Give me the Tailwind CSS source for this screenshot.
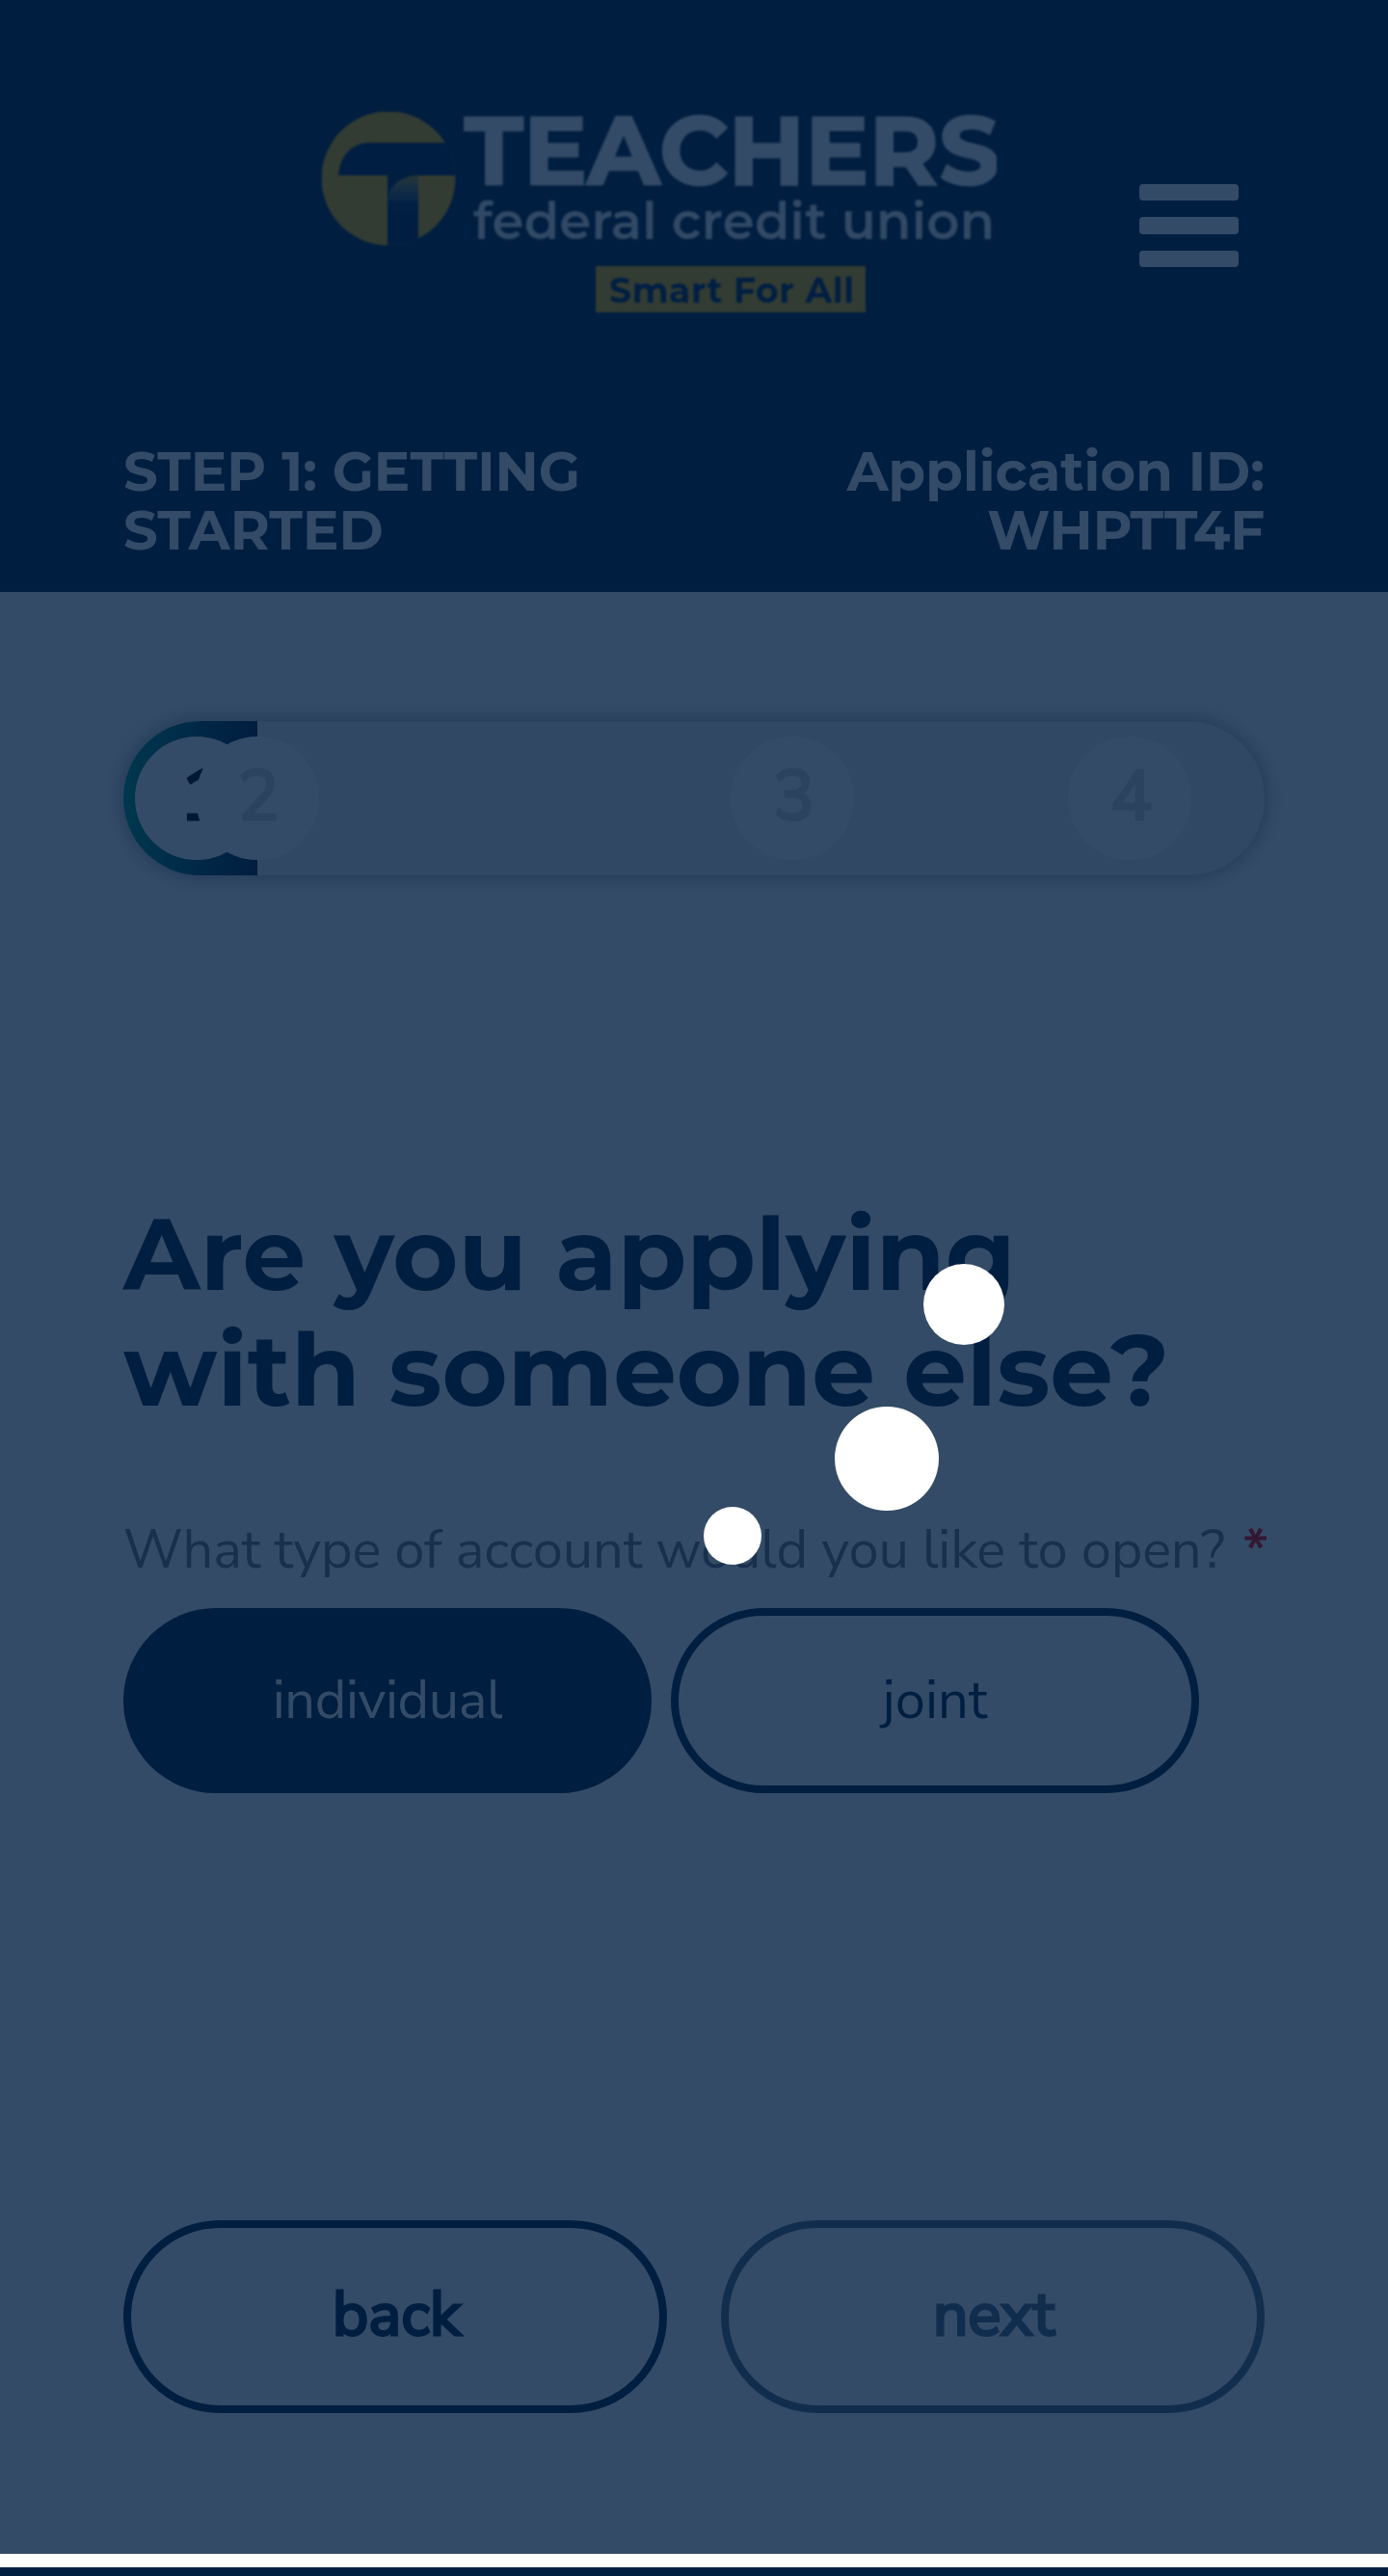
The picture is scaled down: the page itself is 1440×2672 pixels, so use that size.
<!DOCTYPE html>
<html lang="en">
<head>
<meta charset="utf-8">
<title>Teachers Federal Credit Union</title>
<script src="https://cdn.jsdelivr.net/npm/@tailwindcss/browser@4"></script>
</head>
<body class="relative h-[2672px] overflow-hidden bg-white font-['Nunito_Sans','Nunito',sans-serif] text-[56px]">
<header class="flex h-[614px] flex-col justify-between bg-[#001e40] px-32 pt-[116px] pb-[33px] font-['Montserrat',sans-serif] font-bold text-white">
  <div class="flex items-start justify-between pr-[27px] pl-[206px]">
    <svg class="h-[208px] w-[700px] overflow-hidden blur-[1px]" viewBox="0 0 700 208">
      <defs>
        <clipPath id="disc"><circle cx="69" cy="69" r="69.5"/></clipPath>
        <linearGradient id="fold" x1="0" y1="0" x2="0" y2="1"><stop offset="0" stop-color="#ffb400" stop-opacity=".75"/><stop offset=".8" stop-color="#ffffff" stop-opacity="0.02"/></linearGradient>
      </defs>
      <g clip-path="url(#disc)">
        <rect width="140" height="140" fill="#ffb400"/>
        <path d="M17 66C19 45 31 32 50 32H140V66H100V140H68V66Z" fill="#00214a"/>
        <path d="M100 66C84 66 73 74 69 86V104H100Z" fill="url(#fold)"/>
      </g>
      <text x="148" y="74.5" font-size="98" textLength="555" lengthAdjust="spacing" fill="#fff" stroke="#fff" stroke-width="2.5">TEACHERS</text>
      <text x="157" y="132" font-size="53" font-weight="600" textLength="541" lengthAdjust="spacing" fill="#f4f4f4">federal credit union</text>
      <rect x="284" y="160" width="280" height="48" fill="#ffb400"/>
      <text x="298" y="198" font-size="36" textLength="254" lengthAdjust="spacing" fill="#00234d">Smart For All</text>
    </svg>
    <button class="mt-[75px] flex flex-col gap-[17px]" aria-label="Menu">
      <span class="h-[17.3px] w-[103px] rounded bg-white"></span>
      <span class="h-[17.3px] w-[103px] rounded bg-white"></span>
      <span class="h-[17.3px] w-[103px] rounded bg-white"></span>
    </button>
  </div>
  <div class="flex justify-between leading-[61px]">
    <h2>STEP 1: GETTING<br>STARTED</h2>
    <h2 class="text-right">Application ID:<br>WHPTT4F</h2>
  </div>
</header>

<main class="px-32 pt-[134px]">
  <div class="relative h-40 rounded-full bg-[#f0f0f0] text-[72px] text-[#d4d4d4] shadow-[0_0_22px_rgba(0,0,0,0.42)] [-webkit-text-stroke:3px]">
    <div class="h-40 w-[139px] rounded-l-full rounded-r-xs bg-linear-to-r from-[#009b8c] to-[#001e40]"></div>
    <span class="absolute top-4 left-3 flex size-32 items-center justify-center rounded-full bg-white pb-1 pl-2 text-black">1</span>
    <span class="absolute top-4 left-[75px] flex size-32 items-center justify-center rounded-full bg-white pb-1 pl-0.5">2</span>
    <span class="absolute top-4 left-[630px] flex size-32 items-center justify-center rounded-full bg-white pb-1 pl-[3px]">3</span>
    <span class="absolute top-4 left-[980px] flex size-32 items-center justify-center rounded-full bg-white pb-1 pl-[3px]">4</span>
  </div>

  <h1 class="mt-[333px] font-['Montserrat',sans-serif] text-[104px] leading-[119.5px] font-bold text-[#001e40]">Are you applying<br>with someone else?</h1>

  <div class="mt-[86px] -mr-[3px] flex justify-between leading-[84px] tracking-[-0.14px] whitespace-nowrap text-[#777]"><span>What type of account would you like to open?</span><span class="text-[#f00] [-webkit-text-stroke:1px]">*</span></div>
  <div class="mt-[18px] flex gap-5">
    <button class="h-48 w-[548px] rounded-full bg-[#001e40] tracking-[-0.4px] text-white">individual</button>
    <button class="h-48 w-[548px] rounded-full border-8 border-[#001e40] text-[#001e40]">joint</button>
  </div>

  <div class="mt-[443px] flex justify-between text-[64px] text-[#001e40] [-webkit-text-stroke:3px]">
    <button class="h-[200px] w-[564px] rounded-full border-8 border-[#001e40] pb-[5px] pl-[3px]">back</button>
    <button class="h-[200px] w-[564px] rounded-full border-8 border-[#001e4a] pb-[5px] pl-[2px] text-[#001e4a] opacity-65">next</button>
  </div>
</main>

<footer class="absolute inset-x-0 bottom-0 h-[9px] bg-[#001e40]"></footer>

<div class="absolute inset-x-0 top-0 h-[2649px] bg-[#001e40]/80">
  <span class="absolute top-[1311px] left-[958px] size-[84px] rounded-full bg-white"></span>
  <span class="absolute top-[1459px] left-[866px] size-[108px] rounded-full bg-white"></span>
  <span class="absolute top-[1563px] left-[730px] size-[60px] rounded-full bg-white"></span>
</div>
</body>
</html>
